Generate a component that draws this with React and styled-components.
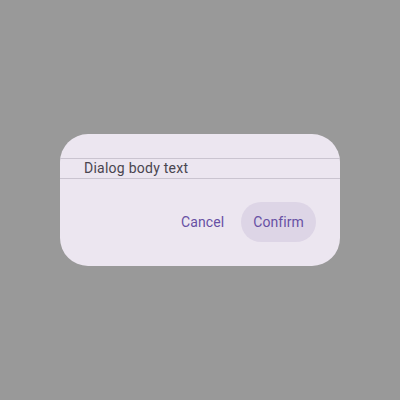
import React from "react";
import styled, { createGlobalStyle } from "styled-components";

const Global = createGlobalStyle`
  html, body { margin: 0; padding: 0; }
  body { background: #999999; font-family: Roboto, "Noto Sans", sans-serif; }
`;

const Scrim = styled.div`
  width: 400px;
  height: 400px;
  display: flex;
  align-items: center;
  justify-content: center;
  background: #999999;
`;

const Dialog = styled.div`
  width: 280px;
  box-sizing: border-box;
  background: #ece6f0;
  border-radius: 28px;
  padding: 24px 0;
  display: flex;
  flex-direction: column;
`;

const Body = styled.div`
  border-top: 1px solid #cac4d0;
  border-bottom: 1px solid #cac4d0;
  padding: 0 24px;
  font-size: 14px;
  line-height: 19px;
  letter-spacing: 0.25px;
  color: #49454f;
`;

const Actions = styled.div`
  display: flex;
  justify-content: flex-end;
  align-items: center;
  gap: 5px;
  padding: 23px 24px 0;
`;

const TextButton = styled.button`
  height: 40px;
  padding: 0 12px;
  border: none;
  border-radius: 20px;
  background: ${(p) => (p.$focused ? "#ddd5e6" : "transparent")};
  color: #6750a4;
  font-family: Roboto, sans-serif;
  font-size: 14px;
  font-weight: 400;
  letter-spacing: 0.1px;
  cursor: pointer;
`;

export default function App() {
  return (
    <>
      <Global />
      <Scrim>
        <Dialog>
          <Body>Dialog body text</Body>
          <Actions>
            <TextButton>Cancel</TextButton>
            <TextButton $focused>Confirm</TextButton>
          </Actions>
        </Dialog>
      </Scrim>
    </>
  );
}
